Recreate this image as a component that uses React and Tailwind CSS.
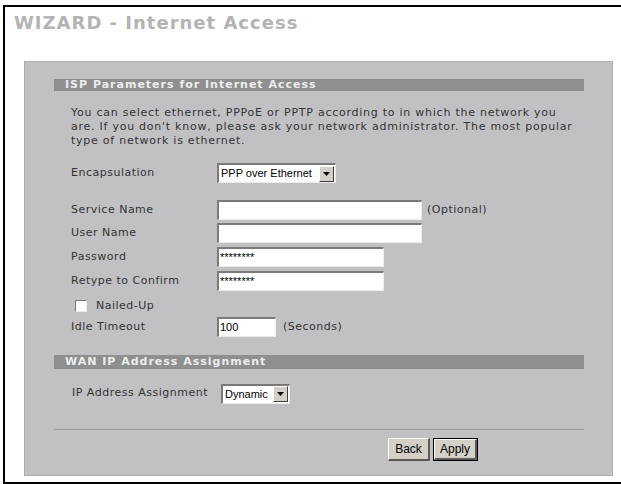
const Field = ({ width, value }) => (
    <div
        className="h-[20px] bg-white border-t-2 border-l-2 border-t-[#7a7a7a] border-l-[#7a7a7a] border-b border-r border-b-[#ececec] border-r-[#ececec] flex items-center pl-[1px] text-[11px] text-black whitespace-nowrap"
        style={{ width, fontFamily: '"Liberation Sans", Arial, sans-serif' }}
    >
        {value}
    </div>
)

const Select = ({ width, value }) => (
    <div
        className="h-[20px] bg-white border-t-2 border-l-2 border-t-[#7a7a7a] border-l-[#7a7a7a] border-b border-r border-b-[#ececec] border-r-[#ececec] flex items-center justify-between pl-[2px] pr-[1px] text-[11px] text-black whitespace-nowrap"
        style={{ width, fontFamily: '"Liberation Sans", Arial, sans-serif' }}
    >
        <span>{value}</span>
        <span className="w-[15px] h-[16px] bg-[#d4d0c8] border border-t-white border-l-white border-b-[#404040] border-r-[#404040] flex items-center justify-center">
            <svg width="7" height="4" viewBox="0 0 7 4"><path d="M0 0h7L3.5 4z" fill="#000" /></svg>
        </span>
    </div>
)

const Row = ({ label, children, className = '' }) => (
    <div className={`flex items-center ${className}`}>
        <div className="w-[146px] tracking-[0.5px]">{label}</div>
        {children}
    </div>
)

const Bar = ({ title, h }) => (
    <div className={`bg-[#8f8f8f] text-[#ededed] font-bold text-[11px] tracking-[1px] pl-[11px] flex items-center ${h}`}>
        {title}
    </div>
)

const Button = ({ label, primary }) => (
    <div className={primary ? 'border border-black' : ''}>
        <div
            className={`bg-[#d4d0c8] border-t border-l border-t-white border-l-white border-b-2 border-r-2 border-b-[#5a5a5a] border-r-[#5a5a5a] text-[12px] text-black flex items-center justify-center ${primary ? 'h-[21px] w-[43px]' : 'h-[23px] w-[42px]'}`}
            style={{ fontFamily: '"Liberation Sans", Arial, sans-serif' }}
        >
            {label}
        </div>
    </div>
)

const App = () => {
    return (
        <div className="w-[621px] h-[484px] bg-white overflow-hidden" style={{ fontFamily: '"DejaVu Sans", Verdana, sans-serif' }}>
            <div className="ml-[3px] mt-[5px] h-[479px] border-l-2 border-t-2 border-b-2 border-black">
                <h1 className="mt-[5px] pl-[9px] text-[18px] leading-[22px] font-bold tracking-[1px] text-[#b3b3b3]">
                    WIZARD - Internet Access
                </h1>
                <div className="mt-[27px] ml-[19px] w-[589px] h-[415px] bg-[#c1c1c3] border border-[#adadad] pt-[17px] pl-[29px] pr-[28px] text-[11px] text-[#333]">
                    <Bar title="ISP Parameters for Internet Access" h="h-[12px]" />
                    <div className="pl-[17px]">
                        <p className="mt-[15px] leading-[14px] whitespace-nowrap tracking-[0.75px]">
                            You can select ethernet, PPPoE or PPTP according to in which the network you<br />
                            are. If you don't know, please ask your network administrator. The most popular<br />
                            type of network is ethernet.
                        </p>
                        <Row label="Encapsulation" className="mt-[15px]">
                            <Select width={119} value="PPP over Ethernet" />
                        </Row>
                        <Row label="Service Name" className="mt-[17px]">
                            <Field width={205} />
                            <span className="ml-[5px] tracking-[0.5px]">(Optional)</span>
                        </Row>
                        <Row label="User Name" className="mt-[3px]">
                            <Field width={205} />
                        </Row>
                        <Row label="Password" className="mt-[4px]">
                            <Field width={167} value="********" />
                        </Row>
                        <Row label="Retype to Confirm" className="mt-[4px]">
                            <Field width={167} value="********" />
                        </Row>
                        <div className="mt-[8px] h-[14px] flex items-center pl-[4px]">
                            <span className="w-[12px] h-[12px] bg-white border-t border-l border-t-[#7a7a7a] border-l-[#7a7a7a] border-b border-r border-b-[#ececec] border-r-[#ececec]" />
                            <span className="ml-[9px] tracking-[0.5px]">Nailed-Up</span>
                        </div>
                        <Row label="Idle Timeout" className="mt-[4px]">
                            <Field width={59} value="100" />
                            <span className="ml-[7px] tracking-[0.5px]">(Seconds)</span>
                        </Row>
                    </div>
                    <div className="mt-[18px]">
                        <Bar title="WAN IP Address Assignment" h="h-[14px]" />
                    </div>
                    <div className="pl-[18px] mt-[14px] flex items-center h-[21px]">
                        <span className="w-[149px] tracking-[0.5px]">IP Address Assignment</span>
                        <Select width={69} value="Dynamic" />
                    </div>
                    <div className="mt-[25px] h-px bg-[#9a9a9a]" />
                    <div className="mt-[8px] flex gap-[3px] pl-[334px]">
                        <Button label="Back" />
                        <Button label="Apply" primary />
                    </div>
                </div>
            </div>
        </div>
    )
}

export default App
